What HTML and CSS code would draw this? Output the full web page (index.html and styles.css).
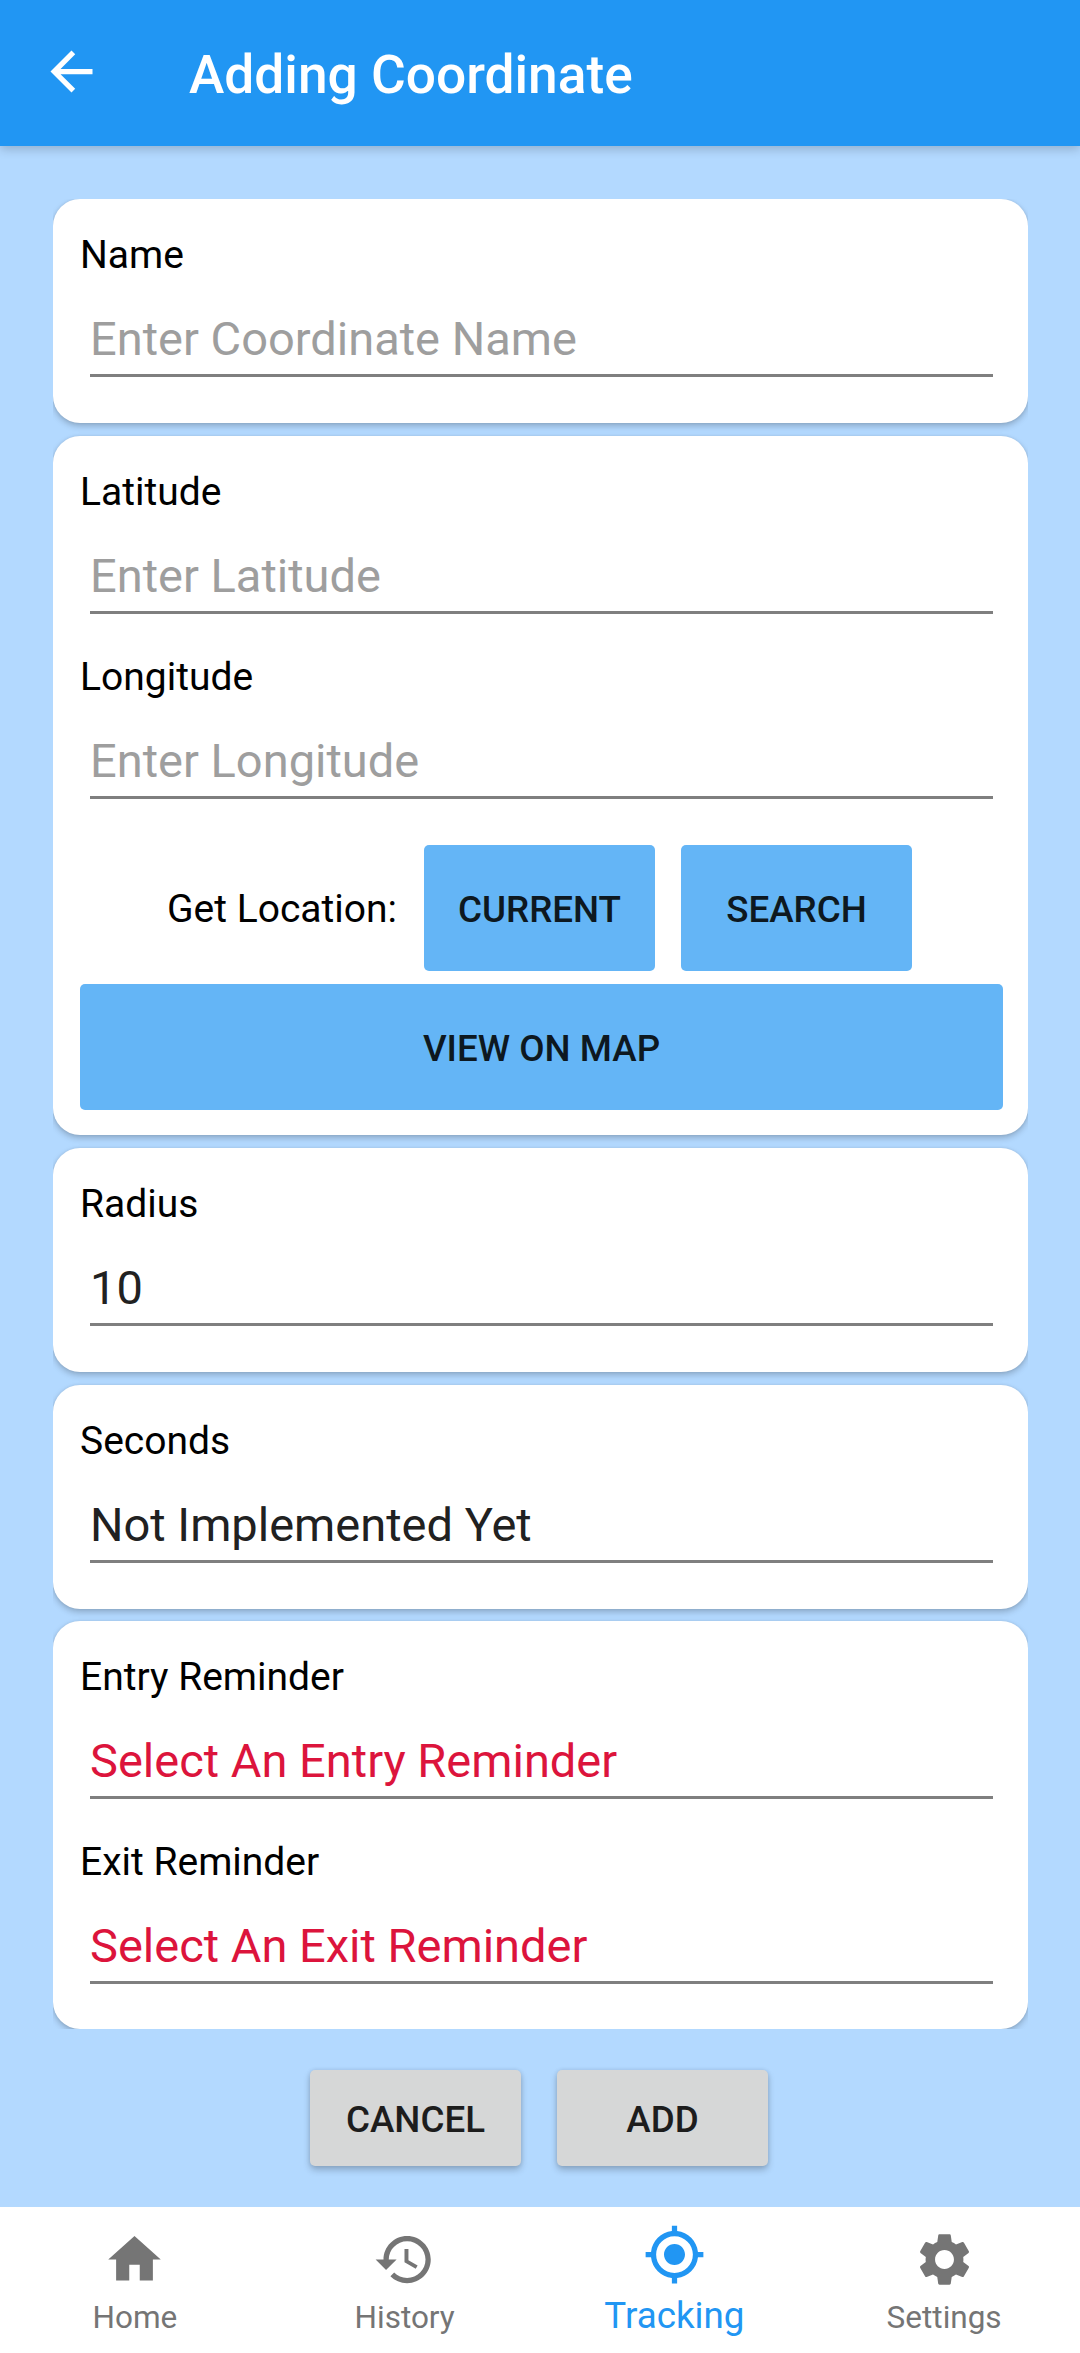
FILE: index.html
```html
<!DOCTYPE html>
<html lang="en">
<head>
<meta charset="utf-8">
<title>Adding Coordinate</title>
<link rel="stylesheet" href="styles.css">
</head>
<body>
<header class="app-bar">
  <svg class="icon back" viewBox="0 0 24 24"><path d="M20 11H7.83l5.59-5.59L12 4l-8 8 8 8 1.41-1.41L7.83 13H20v-2z"/></svg>
  <h1 class="title">Adding Coordinate</h1>
</header>
<main class="content">
  <div class="cards">
    <section class="card">
      <div class="field"><div class="label">Name</div><div class="entry placeholder">Enter Coordinate Name</div></div>
    </section>
    <section class="card location">
      <div class="field"><div class="label">Latitude</div><div class="entry placeholder">Enter Latitude</div></div>
      <div class="field"><div class="label">Longitude</div><div class="entry placeholder">Enter Longitude</div></div>
      <div class="get-location">
        <span class="label">Get Location:</span>
        <button class="btn blue">CURRENT</button>
        <button class="btn blue">SEARCH</button>
      </div>
      <button class="btn blue wide">VIEW ON MAP</button>
    </section>
    <section class="card">
      <div class="field"><div class="label">Radius</div><div class="entry">10</div></div>
    </section>
    <section class="card">
      <div class="field"><div class="label">Seconds</div><div class="entry">Not Implemented Yet</div></div>
    </section>
    <section class="card reminders">
      <div class="field"><div class="label">Entry Reminder</div><div class="entry required">Select An Entry Reminder</div></div>
      <div class="field"><div class="label">Exit Reminder</div><div class="entry required">Select An Exit Reminder</div></div>
    </section>
  </div>
  <div class="actions">
    <button class="btn grey">CANCEL</button>
    <button class="btn grey">ADD</button>
  </div>
</main>
<nav class="tabs">
  <a class="tab">
    <svg class="icon" viewBox="0 0 24 24"><path d="M10 20v-6h4v6h5v-8h3L12 3 2 12h3v8z"/></svg>
    <span class="tab-label">Home</span>
  </a>
  <a class="tab">
    <svg class="icon" viewBox="0 0 24 24"><path d="M13 3c-4.97 0-9 4.03-9 9H1l3.89 3.89.07.14L9 12H6c0-3.87 3.13-7 7-7s7 3.13 7 7-3.13 7-7 7c-1.93 0-3.68-.79-4.94-2.06l-1.42 1.42C8.27 19.99 10.51 21 13 21c4.97 0 9-4.03 9-9s-4.03-9-9-9zm-1 5v5l4.28 2.54.72-1.21-3.5-2.08V8H12z"/></svg>
    <span class="tab-label">History</span>
  </a>
  <a class="tab active">
    <svg class="icon" viewBox="0 0 24 24"><path d="M12 8c-2.21 0-4 1.79-4 4s1.790 4 4 4 4-1.790 4-4-1.790-4-4-4zm8.940 3c-.46-4.170-3.770-7.480-7.940-7.940V1h-2v2.060C6.830 3.520 3.520 6.830 3.060 11H1v2h2.060c.46 4.170 3.770 7.480 7.940 7.940V23h2v-2.060c4.170-.46 7.480-3.770 7.940-7.940H23v-2h-2.060zM12 19c-3.870 0-7-3.130-7-7s3.130-7 7-7 7 3.130 7 7-3.130 7-7 7z"/></svg>
    <span class="tab-label">Tracking</span>
  </a>
  <a class="tab">
    <svg class="icon" viewBox="0 0 24 24"><path d="M19.14 12.94c.04-.3.06-.61.06-.94 0-.32-.02-.64-.07-.94l2.030-1.580c.18-.14.23-.41.12-.61l-1.920-3.320c-.12-.22-.37-.29-.59-.22l-2.390.96c-.5-.38-1.030-.7-1.620-.94l-.36-2.540c-.04-.24-.24-.41-.48-.41h-3.840c-.24 0-.43.17-.47.41l-.36 2.540c-.59.24-1.130.57-1.620.94l-2.390-.96c-.22-.08-.47 0-.59.22L2.740 8.870c-.12.21-.08.47.12.61l2.030 1.580c-.05.3-.09.63-.09.94s.02.64.07.94l-2.030 1.580c-.18.14-.23.41-.12.61l1.920 3.320c.12.22.37.29.59.22l2.390-.96c.5.38 1.030.7 1.620.94l.36 2.540c.05.24.24.41.48.41h3.840c.24 0 .44-.17.47-.41l.36-2.540c.59-.24 1.130-.56 1.620-.94l2.390.96c.22.08.47 0 .59-.22l1.920-3.320c.12-.22.07-.47-.12-.61l-2.010-1.580zM12 15.6c-1.980 0-3.600-1.620-3.600-3.600s1.620-3.600 3.600-3.600 3.600 1.620 3.600 3.600-1.620 3.600-3.600 3.600z"/></svg>
    <span class="tab-label">Settings</span>
  </a>
</nav>
</body>
</html>
```
FILE: styles.css
```css
* { box-sizing: border-box; }

body {
  margin: 0;
  height: 2353px;
  display: flex;
  flex-direction: column;
  background: #b3d9ff;
  font-family: Roboto, sans-serif;
  color: #000;
  overflow: hidden;
}

.icon { width: 63px; height: 63px; fill: currentColor; flex: none; display: block; }

.app-bar {
  height: 146px;
  flex: none;
  display: flex;
  align-items: flex-start;
  padding: 40px 0 0 40px;
  background: #2196f3;
  color: #fff;
  box-shadow: 0 3px 10px rgba(0, 0, 0, 0.2);
}
.title {
  margin: 4px 0 0 86px;
  font-size: 53.25px;
  line-height: 62px;
  font-weight: 500;
}

.content { flex: 1; padding: 53px 52px 0 53px; }

/* Clips the card shadows to the column's edges. */
.cards { display: flex; flex-direction: column; gap: 13px; overflow: hidden; height: 1830px; }

.card {
  flex: none;
  height: 224px;
  padding: 32px 25px 0 27px;
  border-radius: 27px;
  background: #fff;
  box-shadow: 0 3px 6px rgba(0, 0, 0, 0.22), 0 0 3px rgba(0, 0, 0, 0.08);
}
.card.location { height: 699px; }
.card.reminders { height: 408px; margin-top: -1px; }

.field { height: 185px; }
.label { font-size: 39px; line-height: 48px; }
.entry {
  margin: 32px 10px 0;
  height: 66px;
  font-size: 47px;
  line-height: 56px;
  color: #212121;
  border-bottom: 3px solid #7f7f7f;
}
.placeholder { color: #9e9e9e; }
.required { color: #dc143c; }

.btn {
  border: 0;
  padding: 3px 0 0;
  border-radius: 5px;
  font: 500 36.75px/45px Roboto, sans-serif;
}
.blue { width: 231px; height: 126px; background: #64b5f6; color: #0d1820; }
.wide { width: 923px; margin-top: 13px; display: block; }
.get-location {
  display: flex;
  align-items: center;
  margin-top: 7px;
  padding-left: 87px;
}
.get-location .label { width: 257px; padding-top: 2px; }
.get-location .btn + .btn { margin-left: 26px; }

.actions { display: flex; gap: 36px; padding: 41px 0 0 257px; }
.grey {
  width: 211px;
  height: 96px;
  background: #d6d7d7;
  color: #1d1d1d;
  box-shadow: 0 4px 7px rgba(0, 0, 0, 0.22), 0 0 4px rgba(0, 0, 0, 0.1);
}

.tabs { display: flex; height: 146px; flex: none; padding-right: 1px; background: #fff; color: #757575; }
.tab { flex: 1; display: flex; flex-direction: column; align-items: center; padding-top: 21px; }
.tab-label { font-size: 31.5px; line-height: 39px; margin-top: 7px; }
.active { color: #2196f3; padding-top: 16px; }
.active .tab-label { font-size: 36.75px; line-height: 45px; margin-top: 7px; }
```
